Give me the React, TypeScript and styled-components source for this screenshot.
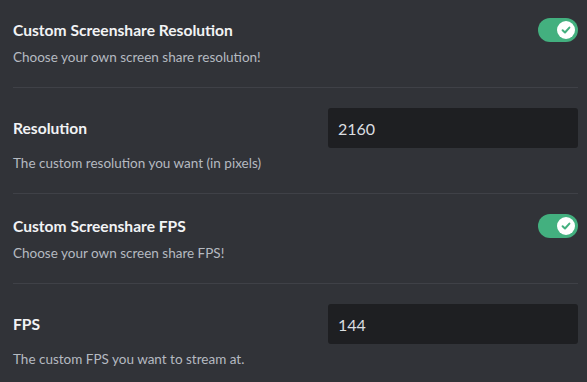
import React from "react";
import styled, { createGlobalStyle } from "styled-components";

const Global = createGlobalStyle`
  html, body { margin: 0; padding: 0; background: #313338; }
  body { font-family: Lato, "Noto Sans", sans-serif; }
`;

const Page = styled.div`
  width: 587px;
  height: 382px;
  overflow: hidden;
  box-sizing: border-box;
  padding: 18px 9px 0 13px;
  background: #313338;
`;

const Section = styled.section`
  display: flex;
  flex-direction: column;
`;

const Row = styled.div`
  display: flex;
  align-items: center;
  justify-content: space-between;
`;

const Title = styled.div`
  color: #f2f3f5;
  font-size: 15.6px;
  font-weight: 700;
  line-height: 24px;
`;

const Description = styled.div`
  margin-top: 5px;
  color: #b5bac1;
  font-size: 13.5px;
  line-height: 20px;
`;

const Divider = styled.div`
  height: 1px;
  background: #3f4147;
  margin: 20px 0;
`;

const Input = styled.input`
  width: 250px;
  height: 40px;
  box-sizing: border-box;
  border: none;
  outline: none;
  border-radius: 3px;
  background: #1e1f22;
  color: #dbdee1;
  padding: 0 10px;
  font-family: Lato, "Noto Sans", sans-serif;
  font-size: 16px;
`;

const Switch = styled.div`
  width: 40px;
  height: 24px;
  border-radius: 12px;
  background: #43b07f;
  display: flex;
  align-items: center;
  justify-content: flex-end;
  padding: 0 3px;
  box-sizing: border-box;
`;

const Knob = styled.div`
  width: 18px;
  height: 18px;
  border-radius: 50%;
  background: #ffffff;
  display: flex;
  align-items: center;
  justify-content: center;
`;

const Toggle = () => (
  <Switch>
    <Knob>
      <svg width="12" height="12" viewBox="0 0 12 12">
        <path d="M2.6 6.2 L5 8.5 L9.4 3.6" fill="none" stroke="#43b07f" strokeWidth="2" strokeLinecap="round" strokeLinejoin="round" />
      </svg>
    </Knob>
  </Switch>
);

export default function App() {
  return (
    <Page>
      <Global />
      <Section>
        <Row>
          <Title>Custom Screenshare Resolution</Title>
          <Toggle />
        </Row>
        <Description>Choose your own screen share resolution!</Description>
      </Section>
      <Divider />
      <Section>
        <Row>
          <Title>Resolution</Title>
          <Input defaultValue="2160" />
        </Row>
        <Description>The custom resolution you want (in pixels)</Description>
      </Section>
      <Divider />
      <Section>
        <Row>
          <Title>Custom Screenshare FPS</Title>
          <Toggle />
        </Row>
        <Description>Choose your own screen share FPS!</Description>
      </Section>
      <Divider />
      <Section>
        <Row>
          <Title>FPS</Title>
          <Input defaultValue="144" />
        </Row>
        <Description>The custom FPS you want to stream at.</Description>
      </Section>
    </Page>
  );
}
